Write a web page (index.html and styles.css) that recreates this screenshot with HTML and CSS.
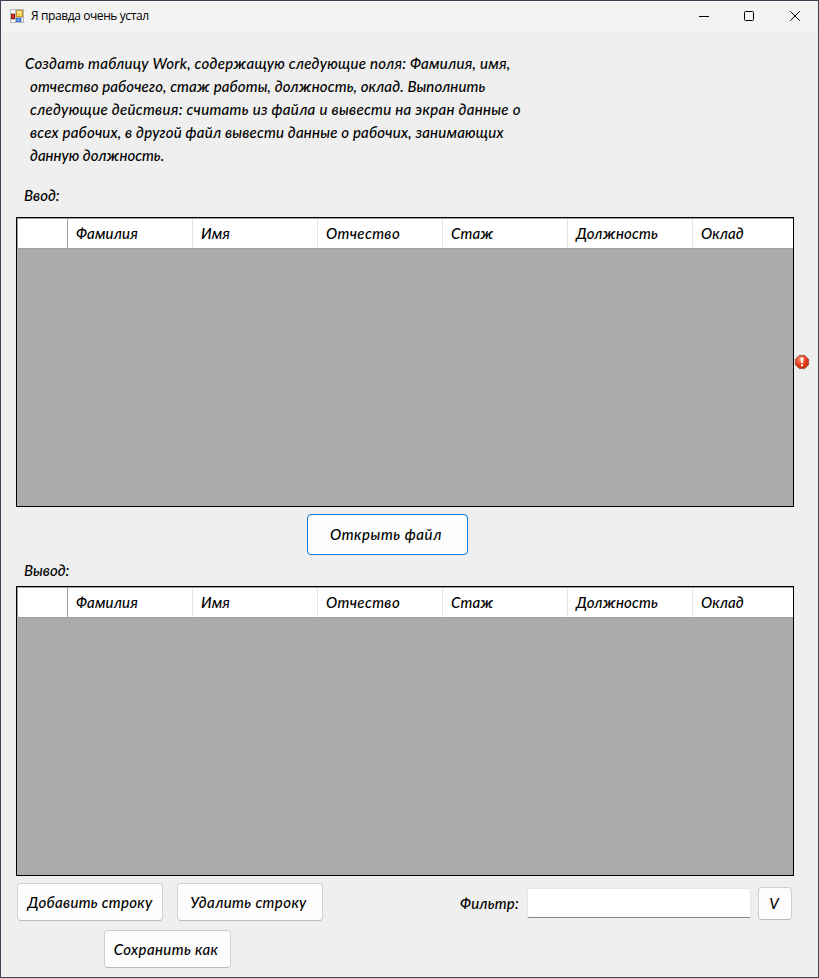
FILE: index.html
```html
<!DOCTYPE html>
<html lang="ru">
<head>
<meta charset="utf-8">
<title>Я правда очень устал</title>
<link rel="stylesheet" href="styles.css">
</head>
<body>
<div class="window">
  <header class="titlebar">
    <svg class="app-icon" width="14" height="14" viewBox="0 0 14 14">
      <path d="M0 0h14v14H0z" fill="#b9b9b9"/>
      <path d="M1 1h4v3H1zM1 11h4v2H1zM12 9h1v4h-1z" fill="#f8f8f8"/>
      <rect x="1.5" y="5.5" width="3" height="4" fill="#d3372d" stroke="#9b1710"/>
      <rect x="6.5" y="1.5" width="6" height="6" fill="#ffd45a" stroke="#c99522"/>
      <path d="M7 2h4v2H7z" fill="#ffe9a0"/>
      <rect x="6.5" y="9.5" width="4" height="3" fill="#6ea4f4" stroke="#3f72d0"/>
    </svg>
    <span class="title">Я правда очень устал</span>
    <div class="controls">
      <svg class="minimize" width="10" height="11" viewBox="0 0 10 11"><path d="M0 5.5h10" stroke="#000"/></svg>
      <svg width="10" height="10" viewBox="0 0 10 10"><rect x=".5" y=".5" width="9" height="9" rx="1" fill="none" stroke="#000"/></svg>
      <svg width="10" height="10" viewBox="0 0 10 10"><path d="M.3.3l9.4 9.4M9.7.3L.3 9.7" stroke="#000"/></svg>
    </div>
  </header>
  <main class="form">
    <div class="task">
      <p class="line line-1">Создать таблицу Work, содержащую следующие поля: Фамилия, имя,</p>
      <p class="line line-2">отчество рабочего, стаж работы, должность, оклад. Выполнить</p>
      <p class="line line-3">следующие действия: считать из файла и вывести на экран данные о</p>
      <p class="line line-4">всех рабочих, в другой файл вывести данные о рабочих, занимающих</p>
      <p class="line">данную должность.</p>
    </div>
    <div class="label label-input">Ввод:</div>
    <div class="grid-row">
      <section class="grid">
        <div class="head"><div class="corner"></div><div class="col">Фамилия</div><div class="col">Имя</div><div class="col wide">Отчество</div><div class="col">Стаж</div><div class="col">Должность</div><div class="col">Оклад</div></div>
      </section>
      <svg class="error" width="16" height="16" viewBox="0 0 16 16">
        <defs><radialGradient id="red" cx=".4" cy=".3" r=".7"><stop offset="0" stop-color="#ff9478"/><stop offset=".55" stop-color="#ea4322"/><stop offset="1" stop-color="#c52c0c"/></radialGradient></defs>
        <path d="M5.3 1.4h5.4l3.9 3.9v5.4l-3.9 3.9H5.3l-3.9-3.9V5.3z" fill="url(#red)" stroke="#9a4a3a" stroke-width=".9" stroke-linejoin="round"/>
        <path d="M6.5 3.5h3L9 9H7zM7 10.2h2v2H7z" fill="#fff"/>
      </svg>
    </div>
    <button class="btn open">Открыть файл</button>
    <div class="label label-output">Вывод:</div>
    <section class="grid">
      <div class="head"><div class="corner"></div><div class="col">Фамилия</div><div class="col">Имя</div><div class="col wide">Отчество</div><div class="col">Стаж</div><div class="col">Должность</div><div class="col">Оклад</div></div>
    </section>
    <div class="footer">
      <div class="actions">
        <button class="btn add">Добавить строку</button>
        <button class="btn remove">Удалить строку</button>
        <button class="btn save">Сохранить как</button>
      </div>
      <div class="filter">
        <label for="filter">Фильтр:</label>
        <input id="filter" type="text">
        <button class="btn apply">V</button>
      </div>
    </div>
  </main>
</div>
</body>
</html>
```
FILE: styles.css
```css
* { box-sizing: border-box; }
body { margin: 0; }
.window {
  width: 819px; height: 978px; border: 1px solid #3b4052; background: #efefef;
  font: italic 500 15px/23px Lato, "Open Sans", sans-serif; color: #000;
}
.titlebar { height: 30px; display: flex; align-items: center; background: #f3f3f3; padding: 0 18px 0 9px; }
.title { font: normal 12px/16px "Open Sans", sans-serif; margin-left: 7px; letter-spacing: -.4px; }
.controls { margin-left: auto; display: flex; align-items: center; gap: 36px; }
.minimize { margin-right: -1px; }
.controls svg, .app-icon, .error { display: block; }
.form { padding: 21px 0 0 15px; }
.task { height: 115px; padding-left: 14px; }
.line { margin: 0; white-space: nowrap; }
.line-1 { margin-left: -5px; letter-spacing: .26px; }
.line-2 { letter-spacing: .12px; }
.line-3 { letter-spacing: .31px; }
.line-4 { letter-spacing: .2px; }
.label { padding-left: 8px; height: 23px; }
.label-input { margin-top: 17px; }
.grid-row { display: flex; align-items: center; margin-top: 10px; }
.grid { width: 778px; height: 290px; border: 1px solid #000; background: #ababab; overflow: hidden; }
.head { height: 31px; display: flex; background: #fff; border-top: 1px solid #a0a0a0; border-bottom: 1px solid #a0a0a0; }
.corner { width: 51px; flex: none; border-left: 1px solid #a0a0a0; border-right: 1px solid #a0a0a0; }
.col { width: 125px; padding: 3px 0 0 8px; border-right: 1px solid #e5e5e5; flex: none; letter-spacing: .15px; }
.col.wide { letter-spacing: .4px; }
.col:last-child { width: 100px; border-right: 0; }
.btn {
  font: inherit; color: #000; background: #fdfdfd; border: 1px solid #d0d0d0; border-bottom-color: #bababa;
  border-radius: 4px; padding: 0; white-space: nowrap;
}
.open { display: block; width: 161px; height: 41px; margin: 7px 0 0 291px; padding-right: 3px; border-color: #0078d4; letter-spacing: .58px; }
.label-output { margin-top: 4px; margin-bottom: 4px; }
.footer { display: flex; padding: 7px 0 0 1px; }
.actions { width: 443px; display: flex; flex-wrap: wrap; gap: 9px 14px; align-content: flex-start; padding-right: 130px; }
.add, .remove { width: 146px; height: 38px; letter-spacing: .3px; }
.remove { padding-right: 3px; letter-spacing: .4px; }
.save { width: 127px; height: 38px; margin-left: 87px; padding-right: 3px; letter-spacing: .4px; }
.filter { display: flex; height: 33px; margin-top: 4px; align-items: center; }
.filter label { width: 67px; letter-spacing: .2px; }
.filter input { width: 224px; height: 30px; border: 1px solid #e6e6e6; border-bottom-color: #858585; border-radius: 2px; background: #fff; margin: 0 7px 2px 0; padding: 0 5px; font: inherit; }
.apply { width: 34px; height: 33px; padding-right: 2px; }
```
